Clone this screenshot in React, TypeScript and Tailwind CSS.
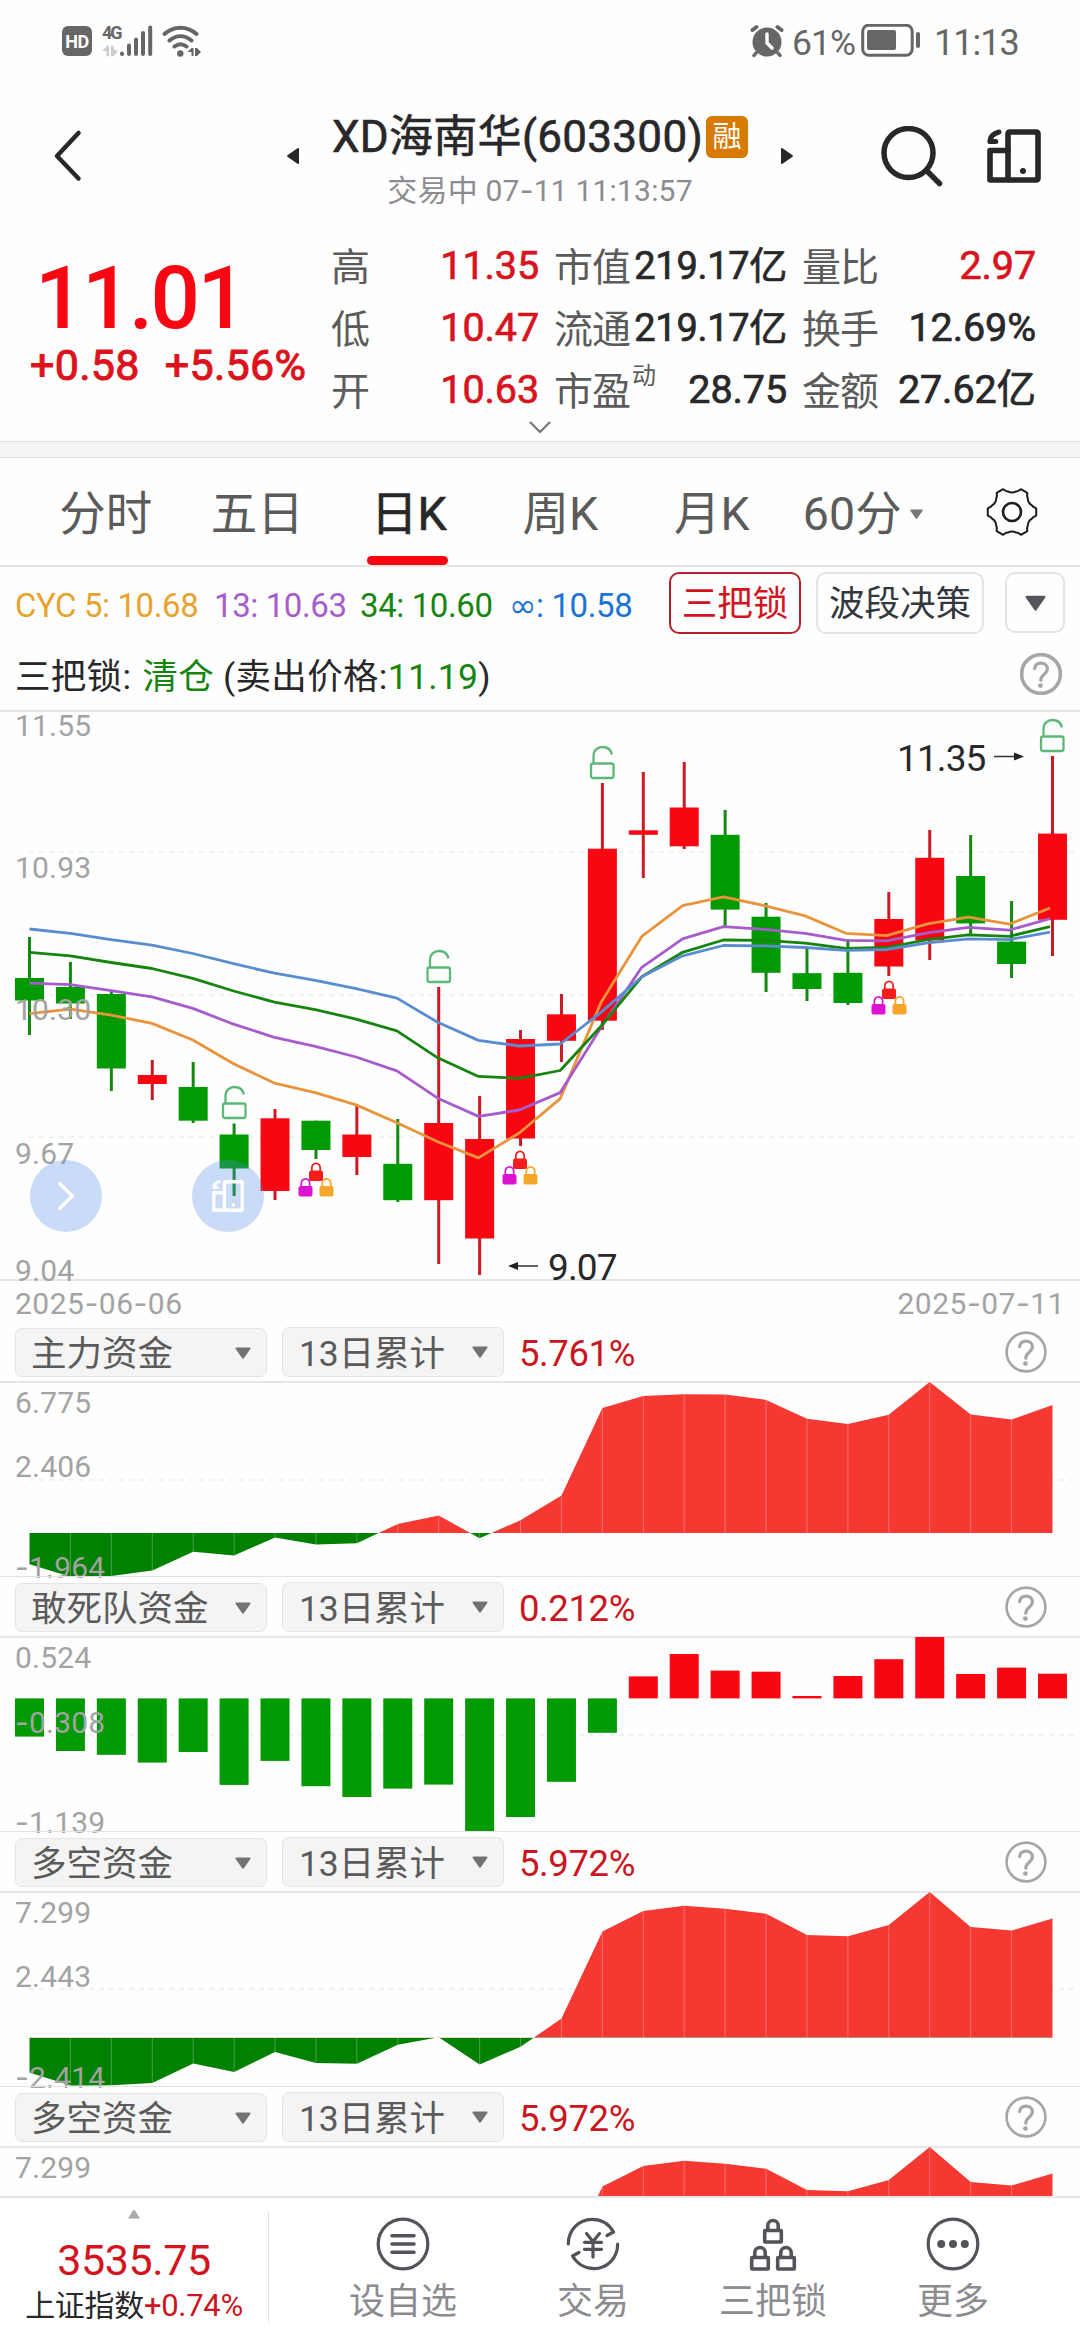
import { useId, type ReactNode } from 'react';

const FIRST_X = 29.5;
const STEP = 40.92;
const UP = '#f80713';
const DOWN = '#029a02';

type Candle = [number, number, number, number, 'r' | 'g'];

// high, body top, body bottom, low, direction (in chart pixels)
const CANDLES: Candle[] = [
  [227, 268, 290.5, 325, 'g'],
  [252, 277, 293.5, 309, 'g'],
  [280.5, 284, 358.5, 381, 'g'],
  [350, 365, 374, 390, 'r'],
  [352, 377, 410.7, 413, 'g'],
  [413.5, 424.5, 458.5, 486, 'g'],
  [399, 408.3, 481, 490, 'r'],
  [410.7, 410.7, 440, 449, 'g'],
  [395, 424.5, 447, 465, 'r'],
  [409, 453.8, 490.2, 492, 'g'],
  [277, 413, 490.2, 554, 'r'],
  [386, 429, 528.5, 565, 'r'],
  [320, 329, 428.5, 436, 'r'],
  [284, 304.3, 330.8, 352, 'r'],
  [73, 138.7, 310.7, 320, 'r'],
  [62, 120.3, 124.8, 168, 'r'],
  [52, 97.5, 136.3, 139, 'r'],
  [100, 124.8, 199.6, 216, 'g'],
  [193, 206.7, 262.8, 282, 'g'],
  [239, 263.2, 279, 291, 'g'],
  [229, 262.8, 293, 295, 'g'],
  [182, 209, 256.5, 266, 'r'],
  [120, 147.8, 230.4, 250, 'r'],
  [125, 166, 213.4, 226, 'g'],
  [191, 231.6, 254, 268, 'g'],
  [46, 123.6, 209.8, 246, 'r'],
];

const AVERAGES: { color: string; ys: number[] }[] = [
  { color: '#e8943c', ys: [303.6, 299.2, 305.1, 313.4, 330, 353.8, 373.1, 382.6, 394.9, 412.7, 431.7, 447.9, 423, 388.6, 292.5, 226.4, 195.6, 186.9, 195.6, 205.9, 223.3, 225.7, 213.8, 207.1, 214.2, 198] },
  { color: '#a75ccb', ys: [273.1, 274.7, 280.6, 286.9, 298.4, 314.2, 327.3, 336.4, 347, 360.9, 388.2, 406.4, 400, 382.6, 317.4, 257.3, 228.8, 216.6, 219.3, 223.3, 230.4, 230.8, 222.9, 217.4, 220.1, 208.7] },
  { color: '#15850f', ys: [242.3, 245.8, 252.5, 258.5, 268.4, 281, 292.1, 299.6, 309.1, 320.9, 347.8, 366.4, 368.4, 360.5, 316.2, 266.8, 242.3, 230, 230.4, 233.2, 238.3, 237.5, 229.6, 224.9, 226.4, 216.6] },
  { color: '#5a8cd0', ys: [219, 223.3, 229.6, 235.1, 243.5, 253.7, 263.2, 270.3, 278.6, 288.1, 312.3, 330.4, 336, 334, 302.4, 266.8, 245.8, 235.5, 235.9, 237.5, 240.3, 239.5, 232.8, 228.8, 229.6, 222.1] },
];

const MAIN_FUND = [182.2, 194.7, 194, 188.6, 169.7, 173.4, 155.5, 162.6, 161.2, 142, 133.5, 156.2, 138.2, 113.6, 26, 13.9, 12.2, 12.5, 17.9, 36.8, 41.9, 32.8, 0, 32.4, 37.5, 23];
const LONG_SHORT = [180.4, 193.6, 193.3, 191, 171.4, 180, 160.1, 171, 171.7, 152.8, 145.2, 172.4, 154.8, 126.6, 39.6, 19, 13.7, 16.7, 21.7, 42.9, 44.2, 33, 0, 34.9, 38.6, 26.6];
const DARE_BARS = [99.6, 114, 117.8, 125.6, 115, 147.9, 123.9, 149.2, 160, 151.6, 147.6, 195, 180, 144.8, 95.8, 39.4, 17, 33.6, 34.7, 59, 39, 22.2, 0, 37, 30.6, 36.7];

/** Sets hyphens in a face whose dash is as wide as a digit. */
function Dashed({ text }: { text: string }) {
  return (
    <>
      {text.split(/(-)/).map((part, i) =>
        part === '-' ? (
          <span key={i} className="font-['Inter']">-</span>
        ) : (
          part
        ),
      )}
    </>
  );
}

function Caret({ className }: { className: string }) {
  return (
    <svg viewBox="0 0 16 12" className={className} fill="currentColor" stroke="currentColor" strokeWidth="2" strokeLinejoin="round">
      <path d="M1.5 1.5h13L8 10.8z" />
    </svg>
  );
}

function Help({ width = 2.6 }: { width?: number }) {
  return (
    <svg viewBox="0 0 42 42" className="h-[42px] w-[42px]" fill="none" stroke="#a6a6a6" strokeWidth={width} strokeLinecap="round">
      <circle cx="21" cy="21" r="19.4" />
      <path d="M14.6 15.6c.6-3.6 3.2-5.4 6.4-5.4 3.8 0 6.4 2.4 6.4 5.6 0 2.8-1.8 4.2-3.6 5.8-1.9 1.7-3 2.9-3 5.6" strokeWidth="3.2" />
      <circle cx="20.4" cy="32.6" r="2.4" fill="#a6a6a6" stroke="none" />
    </svg>
  );
}

function ScreenIcon({ className, weight = 5.6 }: { className: string; weight?: number }) {
  return (
    <svg viewBox="0 0 54 54" className={className} fill="none" stroke="currentColor" strokeWidth={weight} strokeLinejoin="round" strokeLinecap="round">
      <rect x="21" y="3" width="30" height="48" rx="1.5" />
      <path d="M21 21.5H3V51h18" />
      <path d="M12 3C6.5 4.5 3.2 7.5 2.8 12.5h6" strokeWidth={weight - 0.6} />
      <circle cx="36" cy="42" r="3" fill="currentColor" stroke="none" />
    </svg>
  );
}

function StatusBar() {
  return (
    <div className="flex h-[80px] items-center pt-[2px] text-[#666]">
      <div className="ml-[62px] flex h-[30px] w-[30px] items-center justify-center rounded-[6px] bg-[#666] text-[18px] font-bold tracking-[-0.5px] text-white">HD</div>
      <div className="ml-[10px] flex h-[32px] w-[18px] flex-col justify-between">
        <span className="text-[18px] leading-[16px] font-bold tracking-[-2px]">4G</span>
        <svg viewBox="0 0 18 12" className="h-[12px] w-[16px]" fill="#ccc">
          <path d="M6 0h2v12H5V6H0zM10 0h3v4l5 2-5 6h-3z" />
        </svg>
      </div>
      <svg viewBox="0 0 33 32" className="h-[32px] w-[33px]" stroke="#666" strokeWidth="4" strokeLinecap="round">
        <path d="M2 28.5v.5M9 20.5V29M16 14.5V29M23 8V29M30.2 2.5V29" />
      </svg>
      <svg viewBox="0 0 40 32" className="ml-[9px] h-[32px] w-[40px]" fill="none" stroke="#666" strokeWidth="4" strokeLinecap="round">
        <path d="M2.500 9C12 .5 25 .5 34.500 9M7.500 15.500c7-5.800 15-5.800 22 0M12.500 21.500c4-3 8-3 12 0" />
        <circle cx="18.300" cy="28.500" r="3.200" fill="#666" stroke="none" />
        <path d="M29.500 23h2v8h-2v-4h-4zM33 23h2l4 4-4 4h-2z" fill="#666" stroke="none" />
      </svg>
      <svg viewBox="0 0 34 34" className="ml-[548px] h-[34px] w-[34px]" fill="#666" stroke="#666" strokeLinecap="round">
        <circle cx="17" cy="18" r="14.500" stroke="none" />
        <path d="M2.500 6 6.500 3M31.500 6 27.500 3" strokeWidth="4" />
        <path d="m6 29-2 2.500M28 29l2 2.500" strokeWidth="3.500" />
        <path d="M17 10v9l5 5" stroke="#fff" strokeWidth="3.400" fill="none" />
      </svg>
      <span className="mt-[3px] ml-[8px] w-[69px] text-[35.5px] leading-[40px] tracking-[-1px] whitespace-nowrap">61%</span>
      <svg viewBox="0 0 60 34" className="h-[34px] w-[60px]" fill="none" stroke="#666">
        <rect x="1.700" y="1.200" width="49.500" height="30" rx="6" strokeWidth="3" />
        <rect x="6" y="6" width="29" height="20" rx="2" fill="#666" stroke="none" />
        <path d="M57 10v12" strokeWidth="4" strokeLinecap="round" />
      </svg>
      <span className="mt-[3px] ml-[13px] text-[36px] leading-[40px] tracking-[-1px]">11:13</span>
    </div>
  );
}

function Header() {
  return (
    <header className="flex h-[150px] items-start text-[#28282a]">
      <svg viewBox="0 0 30 54" className="mt-[49px] ml-[53px] h-[54px] w-[30px]" fill="none" stroke="currentColor" strokeWidth="4.500" strokeLinecap="round" strokeLinejoin="round">
        <path d="M25.500 4 4 27l21.500 22.500" />
      </svg>
      <svg viewBox="0 0 12 16" className="mt-[68px] ml-[204px] h-[16px] w-[12px]" fill="currentColor">
        <path d="M12 1v14a1 1 0 0 1-1.500.8L.8 9a1.200 1.200 0 0 1 0-2L10.500.2A1 1 0 0 1 12 1z" />
      </svg>
      <div className="ml-[16px] flex w-[450px] flex-col items-center">
        <div className="mt-[32px] flex h-[50px] items-center gap-[3px]">
          <h1 className="text-[44px] leading-[50px] font-normal tracking-[0.3px] whitespace-nowrap [-webkit-text-stroke:0.6px_currentColor]">XD海南华(603300)</h1>
          <span className="flex h-[42px] w-[42px] items-center justify-center rounded-[6px] bg-[#d67b00] text-[29px] leading-[29px] text-white">融</span>
        </div>
        <p className="mt-[11px] text-[30px] leading-[34px] tracking-[0.2px] text-[#8c8c90]">
          交易中 <Dashed text="07-11 11:13:57" />
        </p>
      </div>
      <svg viewBox="0 0 12 16" className="mt-[68px] ml-[16px] h-[16px] w-[12px]" fill="currentColor">
        <path d="M0 1v14a1 1 0 0 0 1.500.8L11.200 9a1.200 1.200 0 0 0 0-2L1.500.2A1 1 0 0 0 0 1z" />
      </svg>
      <svg viewBox="0 0 64 64" className="mt-[46px] ml-[88px] h-[64px] w-[64px]" fill="none" stroke="currentColor" strokeWidth="5.500" strokeLinecap="round">
        <circle cx="27.500" cy="27" r="24.500" />
        <path d="m46 45 12.500 12.500" />
      </svg>
      <ScreenIcon className="mt-[49px] ml-[42px] h-[54px] w-[54px]" />
    </header>
  );
}

function Stat({ label, sup, value, red, className }: { label: string; sup?: string; value: string; red?: boolean; className: string }) {
  const tight = value.length > 6 && value.endsWith('亿');
  return (
    <div className={`flex items-center justify-between ${className}`}>
      <span className="flex pt-[4px] text-[39px] tracking-[-1px] whitespace-nowrap text-[#5b5b5b]">
        {label}
        {sup && <span className="mt-[-16px] ml-[2px] text-[24px]">{sup}</span>}
      </span>
      <span className={`whitespace-nowrap [-webkit-text-stroke:0.7px_currentColor] ${tight ? 'text-[38px] tracking-[-0.3px]' : 'text-[39.5px] tracking-[-0.1px]'} ${red ? 'text-[#d8141e]' : 'text-[#28282a]'}`}>{value}</span>
    </div>
  );
}

function Quote() {
  return (
    <section className="relative flex h-[211px]">
      <div className="w-[331px]">
        <p className="mt-[28px] pl-[35px] text-[87px] leading-[80px] font-medium tracking-[-2.5px] text-[#f80713]">11.01</p>
        <p className="mt-[2px] flex gap-[25px] pl-[30px] text-[43px] leading-[50px] tracking-[0.3px] whitespace-nowrap text-[#dc121c] [-webkit-text-stroke:1px_currentColor]">
          <span>+0.58</span>
          <span>+5.56%</span>
        </p>
      </div>
      <div className="grid h-[191px] grid-rows-3 pt-[5px] leading-[62px]">
        <Stat className="w-[208px]" label="高" value="11.35" red />
        <Stat className="w-[208px]" label="低" value="10.47" red />
        <Stat className="w-[208px]" label="开" value="10.63" red />
      </div>
      <div className="ml-[15px] grid h-[191px] grid-rows-3 pt-[5px] leading-[62px]">
        <Stat className="w-[233px]" label="市值" value="219.17亿" />
        <Stat className="w-[233px]" label="流通" value="219.17亿" />
        <Stat className="w-[233px]" label="市盈" sup="动" value="28.75" />
      </div>
      <div className="ml-[15px] grid h-[191px] grid-rows-3 pt-[5px] leading-[62px]">
        <Stat className="w-[234px]" label="量比" value="2.97" red />
        <Stat className="w-[234px]" label="换手" value="12.69%" />
        <Stat className="w-[234px]" label="金额" value="27.62亿" />
      </div>
      <svg viewBox="0 0 24 14" className="absolute bottom-[7px] left-[528px] h-[14px] w-[24px]" fill="none" stroke="#777" strokeWidth="2.200">
        <path d="m2 2 10 10L22 2" />
      </svg>
    </section>
  );
}

function Tab({ children, active }: { children: ReactNode; active?: boolean }) {
  return (
    <div className={`relative flex h-full w-[151.5px] shrink-0 items-center justify-center pt-[5px] text-[46.5px] leading-[60px] whitespace-nowrap ${active ? 'text-[#28282a] [-webkit-text-stroke:0.7px_currentColor]' : 'text-[#5b5b5b]'}`}>
      {children}
      {active && <span className="absolute bottom-0 left-[34px] h-[9px] w-[81px] rounded-full bg-[#f80713]" />}
    </div>
  );
}

function gearPath() {
  const pts: string[] = [];
  const c = 26;
  for (let k = 0; k < 6; k++) {
    const a = (k * 60 * Math.PI) / 180;
    const p = (r: number, d: number) => `${(c + r * Math.cos(a + d)).toFixed(1)} ${(c + r * Math.sin(a + d)).toFixed(1)}`;
    pts.push(`${k === 0 ? 'M' : 'L'}${p(24.5, -0.15)}L${p(24.5, 0.15)}Q${p(21.5, 0.24)} ${p(21, 0.32)}Q${p(18.2, 0.524)} ${p(21, 0.727)}Q${p(21.5, 0.81)} ${p(24.5, 0.897)}`);
  }
  return pts.join('') + 'Z';
}

function Tabs() {
  return (
    <nav className="flex h-[109px] border-b-2 border-[#e6e6e6] pl-[30px]">
      <Tab>分时</Tab>
      <Tab>五日</Tab>
      <Tab active>日K</Tab>
      <Tab>周K</Tab>
      <Tab>月K</Tab>
      <Tab>
        60分
        <Caret className="ml-[7px] h-[10px] w-[15px] text-[#777]" />
      </Tab>
      <div className="flex w-[150px] items-center pl-[47px]">
        <svg viewBox="0 0 52 52" className="h-[52px] w-[52px]" fill="none" stroke="#1c1c1c" strokeWidth="2" strokeLinejoin="round">
          <path d={gearPath()} />
          <circle cx="26" cy="26" r="9" strokeWidth="2.600" />
        </svg>
      </div>
    </nav>
  );
}

function Indicators() {
  return (
    <section className="h-[143px]">
      <div className="flex h-[74px] items-start">
        <div className="flex w-[669px] pt-[21px] pl-[15px] text-[33px] leading-[36px] tracking-[-0.4px] whitespace-nowrap">
          <span className="w-[199px] text-[#e8a22e]">CYC 5: 10.68</span>
          <span className="w-[146px] text-[#a75ccb]">13: 10.63</span>
          <span className="w-[149px] text-[#15850f]">34: 10.60</span>
          <span className="text-[#1c73d6]">
            <span className="font-['DejaVu_Sans']">∞</span>: 10.58
          </span>
        </div>
        <span className="mt-[5px] flex h-[62px] w-[132px] items-center justify-center rounded-[10px] border-2 border-[#b9202a] pt-[4px] text-[35.5px] text-[#d2141e]">三把锁</span>
        <span className="mt-[5px] ml-[15px] flex h-[62px] w-[168px] items-center justify-center rounded-[10px] border-2 border-[#e4e4e4] pt-[4px] text-[35.5px] text-[#333740]">波段决策</span>
        <span className="mt-[5px] ml-[21px] flex h-[61px] w-[60px] items-center justify-center rounded-[10px] border-2 border-[#e4e4e4]">
          <Caret className="h-[16px] w-[21px] text-[#55555c]" />
        </span>
      </div>
      <div className="flex h-[69px] justify-between pr-[18px] pl-[15px]">
        <p className="pt-[13px] text-[35.5px] leading-[46px] tracking-[0.3px] whitespace-nowrap text-[#28282a]">
          三把锁: <span className="ml-[2px] text-[#15850f]">清仓</span> (卖出价格:<span className="text-[#15850f]">11.19</span>)
        </p>
        <div className="pt-[12px]">
          <Help width={3.6} />
        </div>
      </div>
    </section>
  );
}

function OpenLock({ x, y }: { x: number; y: number }) {
  return (
    <g transform={`translate(${x - 12} ${y})`} fill="none" stroke="#5db878" strokeWidth="2.300">
      <rect x="1" y="17.500" width="22.500" height="14.500" rx="2" />
      <path d="M3.500 17V10C3.500 4.500 7.500 1 12.500 1c5 0 8.500 3 9.300 7.500" />
    </g>
  );
}

function ClosedLock({ x, y, color }: { x: number; y: number; color: string }) {
  return (
    <g transform={`translate(${x - 7} ${y})`}>
      <rect x="0" y="8.500" width="14" height="10.500" rx="2" fill={color} />
      <path d="M2.800 9.500V6a4.200 4.700 0 0 1 8.400 0v3.500" fill="none" stroke={color} strokeWidth="1.700" />
    </g>
  );
}

function LockTrio({ x, y }: { x: number; y: number }) {
  return (
    <>
      <ClosedLock x={x} y={y} color="#f51c1c" />
      <ClosedLock x={x - 10.5} y={y + 15.5} color="#dc14d2" />
      <ClosedLock x={x + 10.5} y={y + 15.5} color="#f5a52a" />
    </>
  );
}

function AxisLabel({ className, text }: { className: string; text: string }) {
  return (
    <span className={`absolute left-[15px] text-[30px] leading-[30px] tracking-[0.2px] text-[#a3a3a3] ${className}`}>
      <Dashed text={text} />
    </span>
  );
}

function Grid({ ys }: { ys: number[] }) {
  return (
    <>
      {ys.map((y) => (
        <path key={y} d={`M29 ${y}H1076`} stroke="#eee" strokeWidth="1.500" strokeDasharray="5 5" />
      ))}
    </>
  );
}

function CandleChart() {
  return (
    <section className="relative h-[571px] border-y-2 border-[#e6e6e6]">
      <svg viewBox="0 2 1080 567" className="absolute inset-0 h-[567px] w-[1080px]">
        <Grid ys={[142, 285, 427]} />
        {CANDLES.map(([hi, top, bottom, lo, dir], i) => {
          const x = FIRST_X + i * STEP;
          return (
            <g key={i}>
              <rect x={x - 1.5} y={hi} width="3" height={lo - hi} fill={dir === 'r' ? '#cc1a24' : '#128a12'} />
              <rect x={x - 14.5} y={top} width="29" height={bottom - top} fill={dir === 'r' ? UP : DOWN} />
            </g>
          );
        })}
        {AVERAGES.map(({ color, ys }) => (
          <polyline key={color} points={ys.map((y, i) => `${(FIRST_X + i * 40.82).toFixed(1)},${y}`).join(' ')} fill="none" stroke={color} strokeWidth="2.800" strokeLinejoin="round" />
        ))}
        <OpenLock x={234} y={376} />
        <OpenLock x={438.5} y={240} />
        <OpenLock x={602} y={36} />
        <OpenLock x={1052} y={9} />
        <LockTrio x={316} y={452} />
        <LockTrio x={520} y={440} />
        <LockTrio x={889} y={270} />
        <path d="M516 556h22M994 46.500h22" stroke="#333" strokeWidth="1.500" />
        <path d="m508 556 10-4v8zM1024 46.500l-10-4v8z" fill="#222" />
      </svg>
      <AxisLabel className="top-[-1px]" text="11.55" />
      <AxisLabel className="top-[141px]" text="10.93" />
      <AxisLabel className="top-[283px]" text="10.30" />
      <AxisLabel className="top-[427px]" text="9.67" />
      <AxisLabel className="top-[544px]" text="9.04" />
      <span className="absolute top-[28px] left-[897px] text-[37px] leading-[38px] tracking-[-0.9px] text-[#28282a]">11.35</span>
      <span className="absolute top-[537px] left-[548px] text-[37px] leading-[38px] tracking-[-0.9px] text-[#28282a]">9.07</span>
      <button className="absolute top-[448px] left-[30px] flex h-[72px] w-[72px] items-center justify-center rounded-full bg-[#508ce6]/30 text-white">
        <svg viewBox="0 0 18 30" className="h-[30px] w-[18px]" fill="none" stroke="currentColor" strokeWidth="3.200" strokeLinecap="round" strokeLinejoin="round">
          <path d="M2.500 2.500 15.500 15l-13 12.500" />
        </svg>
      </button>
      <button className="absolute top-[448px] left-[192px] flex h-[72px] w-[72px] items-center justify-center rounded-full bg-[#508ce6]/30 text-white">
        <ScreenIcon className="h-[32px] w-[32px]" />
      </button>
    </section>
  );
}

function FundArea({ ys, zero, grid }: { ys: number[]; zero: number; grid: number }) {
  const id = useId();
  const xs = ys.map((_, i) => FIRST_X + i * STEP);
  const points = `${xs[0]},${zero} ${ys.map((y, i) => `${xs[i].toFixed(1)},${y}`).join(' ')} ${xs[xs.length - 1]},${zero}`;
  return (
    <svg viewBox="0 0 1080 195" className="h-[195px] w-[1080px]">
      <defs>
        <clipPath id={`${id}u`}>
          <rect x="0" y="0" width="1080" height={zero} />
        </clipPath>
        <clipPath id={`${id}d`}>
          <rect x="0" y={zero} width="1080" height={195 - zero} />
        </clipPath>
      </defs>
      <Grid ys={[grid]} />
      <polygon points={points} fill="#f53832" clipPath={`url(#${id}u)`} />
      <polygon points={points} fill="#028002" clipPath={`url(#${id}d)`} />
      {xs.slice(1, -1).map((x, i) => (
        <path key={x} d={`M${x} ${zero}V${ys[i + 1]}`} stroke="#fff" strokeOpacity="0.280" strokeWidth="1" />
      ))}
    </svg>
  );
}

function FundBars() {
  const zero = 61.4;
  return (
    <svg viewBox="0 0 1080 195" className="h-[195px] w-[1080px]">
      <Grid ys={[98]} />
      {DARE_BARS.map((y, i) => (
        <rect key={i} x={FIRST_X + i * STEP - 14.5} y={Math.min(y, zero)} width="29" height={Math.abs(y - zero)} fill={y > zero ? DOWN : UP} />
      ))}
    </svg>
  );
}

function FundPanel({ name, value, labels, children }: { name: string; value: string; labels: string[]; children: ReactNode }) {
  return (
    <section className="h-[255px]">
      <div className="flex h-[61px] items-start border-b-2 border-[#e6e6e6] pt-[5px] text-[35.5px] whitespace-nowrap text-[#5b5b5b]">
        <div className="mt-px ml-[15px] flex h-[49px] w-[252px] items-center justify-between rounded-[7px] border border-[#e4e4e4] bg-[#f4f4f4] pr-[15px] pl-[15px] leading-[47px]">
          <span className="pt-[3px]">{name}</span>
          <Caret className="h-[12px] w-[16px] text-[#727275]" />
        </div>
        <div className="ml-[15px] flex h-[50px] w-[222px] items-center justify-between rounded-[7px] border border-[#e4e4e4] bg-[#f4f4f4] pr-[15px] pl-[16px] leading-[47px]">
          <span className="pt-[4px] tracking-[-0.1px]">13日累计</span>
          <Caret className="h-[12px] w-[16px] text-[#727275]" />
        </div>
        <span className="mt-[3px] ml-[15px] text-[36.5px] leading-[48px] tracking-[-0.4px] text-[#ca1620]">{value}</span>
        <div className="mt-[4px] mr-[33px] ml-auto">
          <Help />
        </div>
      </div>
      <div className="relative h-[194px]">
        <div className="absolute -top-px left-0">{children}</div>
        {labels[0] && <AxisLabel className="top-[5px]" text={labels[0]} />}
        {labels[1] && <AxisLabel className="top-[69px]" text={labels[1]} />}
        {labels[2] && <AxisLabel className="top-[169px]" text={labels[2]} />}
        <div className="absolute bottom-0 h-px w-full bg-[#e2e2e2]" />
      </div>
    </section>
  );
}

function NavItem({ label, children }: { label: string; children: ReactNode }) {
  return (
    <div className="flex w-[180px] flex-col items-center pt-[18px] text-[#53535a]">
      <svg viewBox="0 0 56 56" className="h-[56px] w-[56px]" fill="none" stroke="currentColor" strokeWidth="3.200" strokeLinecap="round" strokeLinejoin="round">
        {children}
      </svg>
      <span className="mt-[8px] text-[36px] leading-[44px] text-[#8c8c90]">{label}</span>
    </div>
  );
}

function NavLock({ x, y }: { x: number; y: number }) {
  return (
    <g transform={`translate(${x} ${y})`} strokeWidth="3.600">
      <rect x="-8.300" y="10.500" width="16.600" height="11.500" rx="0.500" />
      <path d="M-5.200 10V5.500a5.200 5 0 0 1 10.400 0V10" />
    </g>
  );
}

function BottomBar() {
  return (
    <footer className="relative flex h-[144px] border-t-2 border-[#e4e4e4] bg-white">
      <div className="flex w-[268px] flex-col items-center">
        <svg viewBox="0 0 12 9" className="mt-[12px] h-[9px] w-[12px]" fill="#aaa">
          <path d="M5 .6a1.200 1.200 0 0 1 2 0L12 8.500H0z" />
        </svg>
        <span className="mt-[17px] text-[43px] leading-[48px] tracking-[-0.4px] text-[#d2141e]">3535.75</span>
        <span className="mt-[5px] text-[30px] leading-[34px] tracking-[-0.3px] whitespace-nowrap text-[#28282a]">
          上证指数<span className="text-[31px] text-[#ca1620]">+0.74%</span>
        </span>
      </div>
      <div className="mt-[14px] h-[111px] w-px bg-[#e0e0e0]" />
      <div className="mr-[10px] ml-[44px]">
        <NavItem label="设自选">
          <circle cx="28" cy="28" r="24.800" />
          <path d="M17 19.800h22M17 28h22M17 36.200h22" strokeWidth="3.600" />
        </NavItem>
      </div>
      <NavItem label="交易">
        <path d="M3.300 28C3.300 14 14 3.300 27 3.300c9 0 17 4.500 21.500 12.700L42 19.500" />
        <path d="M52.700 28C52.700 42 42 52.700 29 52.700c-9 0-17-5-21.500-12.700l6.500-3.500" />
        <path d="m21.500 17.500 6.500 8 6.500-8M28 26v15M19.500 26.300h17M19.500 33.300h17" />
      </NavItem>
      <NavItem label="三把锁">
        <NavLock x={28} y={4} />
        <NavLock x={15} y={31} />
        <NavLock x={41} y={31} />
      </NavItem>
      <NavItem label="更多">
        <circle cx="28" cy="28" r="24.800" />
        <path d="M16.200 28h.01M28 28h.01M39.800 28h.01" strokeWidth="8" />
      </NavItem>
    </footer>
  );
}

export default function App() {
  return (
    <main className="flex h-[2340px] w-[1080px] flex-col overflow-hidden bg-[#fefefe] font-['Roboto','Noto_Sans_CJK_SC',sans-serif]">
      <StatusBar />
      <Header />
      <Quote />
      <div className="h-[17px] shrink-0 border-y border-[#e2e2e2] bg-[#f4f4f4]" />
      <Tabs />
      <Indicators />
      <CandleChart />
      <div className="flex h-[41px] shrink-0 items-center justify-between px-[15px] pt-[3px] text-[30px] leading-[34px] tracking-[0.5px] text-[#a3a3a3]">
        <span><Dashed text="2025-06-06" /></span>
        <span><Dashed text="2025-07-11" /></span>
      </div>
      <div className="h-[874px] shrink-0 overflow-hidden">
        <FundPanel name="主力资金" value="5.761%" labels={['6.775', '2.406', '-1.964']}>
          <FundArea ys={MAIN_FUND} zero={151} grid={98} />
        </FundPanel>
        <FundPanel name="敢死队资金" value="0.212%" labels={['0.524', '-0.308', '-1.139']}>
          <FundBars />
        </FundPanel>
        <FundPanel name="多空资金" value="5.972%" labels={['7.299', '2.443', '-2.414']}>
          <FundArea ys={LONG_SHORT} zero={145.8} grid={97} />
        </FundPanel>
        <FundPanel name="多空资金" value="5.972%" labels={['7.299']}>
          <FundArea ys={LONG_SHORT} zero={145.8} grid={97} />
        </FundPanel>
      </div>
      <BottomBar />
    </main>
  );
}
